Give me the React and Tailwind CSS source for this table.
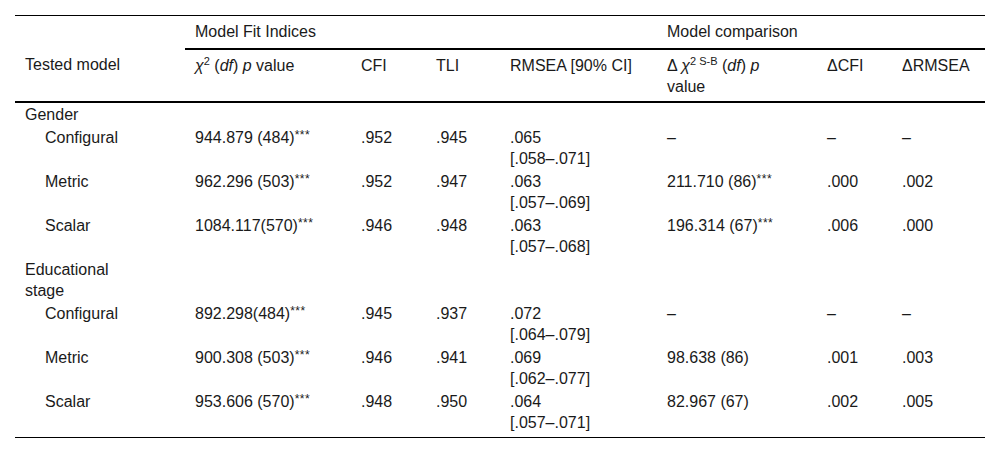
const rows = [
  { group: 'Gender' },
  { name: 'Configural', chi: '944.879 (484)', chiSig: true, cfi: '.952', tli: '.945', rmsea: '.065', ci: '[.058–.071]', dchi: '–', dchiSig: false, dcfi: '–', drmsea: '–' },
  { name: 'Metric', chi: '962.296 (503)', chiSig: true, cfi: '.952', tli: '.947', rmsea: '.063', ci: '[.057–.069]', dchi: '211.710 (86)', dchiSig: true, dcfi: '.000', drmsea: '.002' },
  { name: 'Scalar', chi: '1084.117(570)', chiSig: true, cfi: '.946', tli: '.948', rmsea: '.063', ci: '[.057–.068]', dchi: '196.314 (67)', dchiSig: true, dcfi: '.006', drmsea: '.000' },
  { group: ['Educational', 'stage'] },
  { name: 'Configural', chi: '892.298(484)', chiSig: true, cfi: '.945', tli: '.937', rmsea: '.072', ci: '[.064–.079]', dchi: '–', dchiSig: false, dcfi: '–', drmsea: '–' },
  { name: 'Metric', chi: '900.308 (503)', chiSig: true, cfi: '.946', tli: '.941', rmsea: '.069', ci: '[.062–.077]', dchi: '98.638 (86)', dchiSig: false, dcfi: '.001', drmsea: '.003' },
  { name: 'Scalar', chi: '953.606 (570)', chiSig: true, cfi: '.948', tli: '.950', rmsea: '.064', ci: '[.057–.071]', dchi: '82.967 (67)', dchiSig: false, dcfi: '.002', drmsea: '.005' },
];

function Stars() {
  return <span className="relative -top-[4px] text-[12px] leading-none tracking-[0.5px]">***</span>;
}

export default function App() {
  return (
    <div className="min-h-screen bg-white px-[15px] pt-[15px] text-[16px] leading-[21px] text-[#1a1a1a]" style={{ fontFamily: '"Liberation Sans", Arial, sans-serif' }}>
      <table className="w-[970px] table-fixed border-collapse border-t border-b border-black">
        <colgroup>
          <col className="w-[170px]" />
          <col className="w-[166px]" />
          <col className="w-[75px]" />
          <col className="w-[74px]" />
          <col className="w-[157px]" />
          <col className="w-[160px]" />
          <col className="w-[75px]" />
          <col className="w-[93px]" />
        </colgroup>
        <thead>
          <tr>
            <th className="pl-[10px] pt-[5px] pb-[6px] text-left font-normal"></th>
            <th colSpan={4} className="border-b-2 border-black pl-[10px] pt-[5px] pb-[6px] text-left font-normal">Model Fit Indices</th>
            <th colSpan={3} className="border-b-2 border-black pl-[10px] pt-[5px] pb-[6px] text-left font-normal">Model comparison</th>
          </tr>
          <tr className="border-b-2 border-black align-top">
            <th className="pl-[10px] pt-[5px] pb-[4px] text-left font-normal">Tested model</th>
            <th className="pl-[10px] pt-[5px] pb-[4px] text-left font-normal">
              <i>χ</i><span className="relative -top-[6px] text-[11px] leading-none">2</span> (<i>df</i>) <i>p</i> value
            </th>
            <th className="pl-[10px] pt-[5px] pb-[4px] text-left font-normal">CFI</th>
            <th className="pl-[10px] pt-[5px] pb-[4px] text-left font-normal">TLI</th>
            <th className="pl-[10px] pt-[5px] pb-[4px] text-left font-normal">RMSEA [90% CI]</th>
            <th className="pl-[10px] pt-[5px] pb-[4px] text-left font-normal">
              Δ <i>χ</i><span className="relative -top-[6px] text-[11px] leading-none">2 S-B</span> (<i>df</i>) <i>p</i>
              <br />
              value
            </th>
            <th className="pl-[10px] pt-[5px] pb-[4px] text-left font-normal">ΔCFI</th>
            <th className="pl-[10px] pt-[5px] pb-[4px] text-left font-normal">ΔRMSEA</th>
          </tr>
        </thead>
        <tbody>
          {rows.map((r, i) => {
            const pb = i === rows.length - 1 ? 'pb-[4px]' : 'pb-px';
            return r.group ? (
              <tr key={i}>
                <td className="pl-[10px] py-px">
                  {Array.isArray(r.group) ? (
                    <>
                      {r.group[0]}
                      <br />
                      {r.group[1]}
                    </>
                  ) : (
                    r.group
                  )}
                </td>
                <td colSpan={7}></td>
              </tr>
            ) : (
              <tr key={i} className="align-top">
                <td className={`pl-[30px] pt-px ${pb}`}>{r.name}</td>
                <td className={`pl-[10px] pt-px ${pb}`}>
                  {r.chi}
                  {r.chiSig && <Stars />}
                </td>
                <td className={`pl-[10px] pt-px ${pb}`}>{r.cfi}</td>
                <td className={`pl-[10px] pt-px ${pb}`}>{r.tli}</td>
                <td className={`pl-[10px] pt-px ${pb}`}>
                  {r.rmsea}
                  <br />
                  {r.ci}
                </td>
                <td className={`pl-[10px] pt-px ${pb}`}>
                  {r.dchi}
                  {r.dchiSig && <Stars />}
                </td>
                <td className={`pl-[10px] pt-px ${pb}`}>{r.dcfi}</td>
                <td className={`pl-[10px] pt-px ${pb}`}>{r.drmsea}</td>
              </tr>
            );
          })}
        </tbody>
      </table>
    </div>
  );
}
